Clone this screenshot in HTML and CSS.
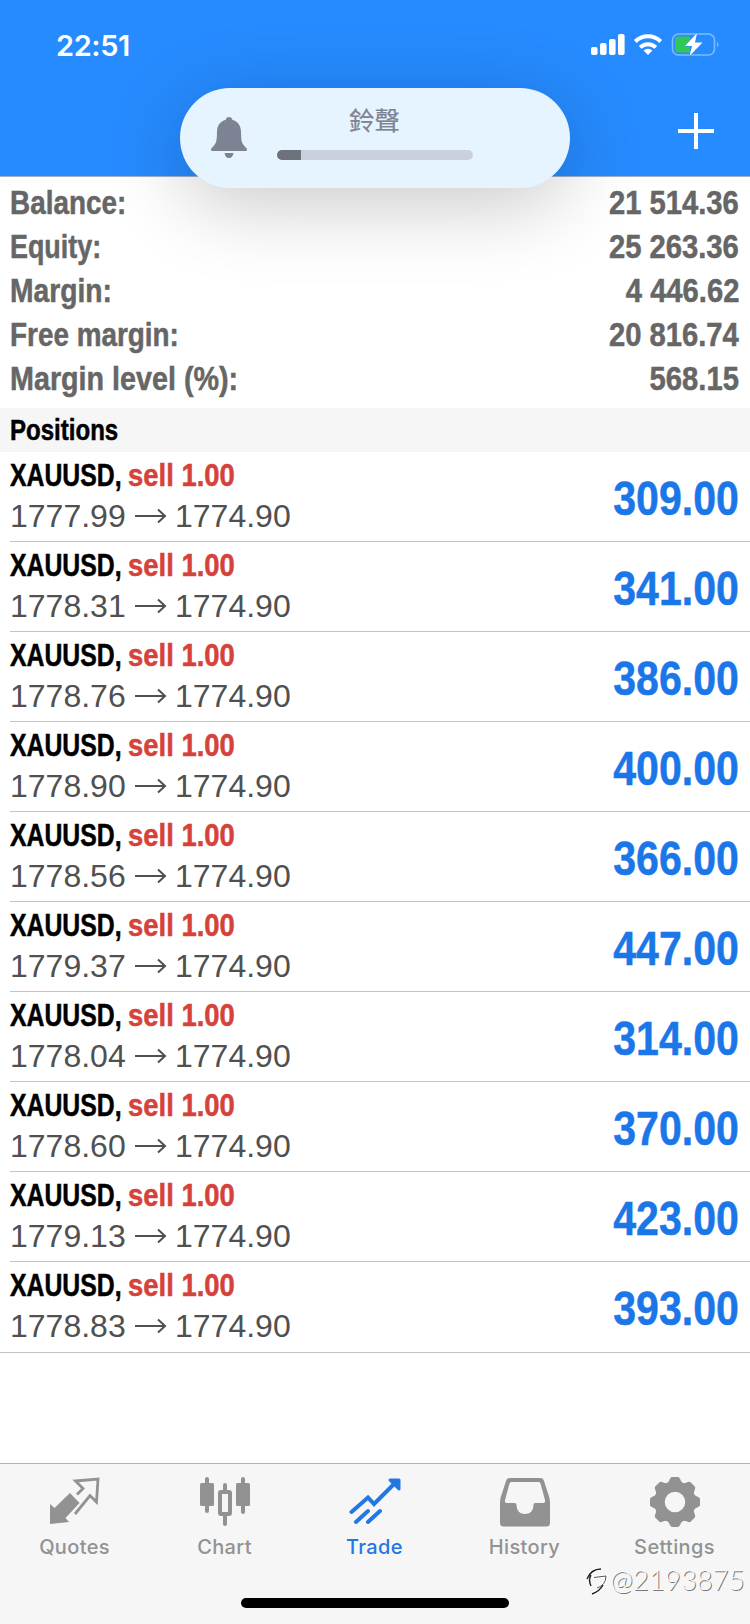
FILE: index.html
```html
<!DOCTYPE html>
<html lang="en">
<head>
  <meta charset="UTF-8">
  <meta name="viewport" content="width=device-width, initial-scale=1.0">
  <title>Trade</title>
  <link rel="stylesheet" href="styles.css">
</head>
<body>
  <header>
    <div class="status-bar">
      <span class="time">22:51</span>
      <svg class="status-icons" width="130" height="26" viewBox="0 0 130 26">
        <g fill="#fff">
          <rect x="1" y="15" width="6.6" height="8" rx="2"/>
          <rect x="10" y="11" width="6.6" height="12" rx="2"/>
          <rect x="19" y="7" width="6.6" height="16" rx="2"/>
          <rect x="28" y="2" width="6.6" height="21" rx="2"/>
          <path d="M58 23l-4.400-4.400a6.300 6.300 0 0 1 8.800 0z"/>
        </g>
        <g fill="none" stroke="#fff" stroke-width="4">
          <path d="M45.300 9.500a18 18 0 0 1 25.400 0"/>
          <path d="M50.200 15.400a11 11 0 0 1 15.600 0"/>
        </g>
        <rect x="82.500" y="2" width="42" height="21" rx="6" fill="none" stroke="#7fbcff" stroke-width="1.600"/>
        <path d="M127 9.500q3 3 0 6z" fill="#7fbcff"/>
        <path d="M88 4.500h12v16H88a3 3 0 0 1-3-3v-10a3 3 0 0 1 3-3z" fill="#32c759"/>
        <path d="M107 1L95 14h7l-2.500 10L112.500 10.500h-7.500z" fill="#fff" stroke="#268bff" stroke-width="1" paint-order="stroke"/>
      </svg>
    </div>
    <svg class="add" width="36" height="36" viewBox="0 0 36 36">
      <path d="M18 0v36M0 18h36" stroke="#fff" stroke-width="4"/>
    </svg>
  </header>

  <!-- ringer volume overlay -->
  <div class="ringer">
    <svg class="bell" width="36" height="42" viewBox="0 0 36 42">
      <path d="M18 0c2 0 3 1.200 3.300 2.700C27 4.200 29.800 8.800 30 14.500c.2 8 .2 11 3.500 14.500 1.500 1.700 2.500 2.600 2.500 3.800 0 .8-.6 1.200-1.500 1.200h-33C.6 34 0 33.600 0 32.800c0-1.200 1-2.100 2.500-3.800C5.800 25.500 5.800 22.500 6 14.500 6.200 8.800 9 4.200 14.700 2.700 15 1.200 16 0 18 0zM13.500 36h9c-.4 3-2 5-4.500 5s-4.100-2-4.500-5z" fill="#7d8392"/>
    </svg>
    <div class="ringer-body">
      <span class="ringer-title">鈴聲</span>
      <div class="volume"><div class="volume-level"></div></div>
    </div>
  </div>

  <main>
    <div class="summary">
      <div class="line"><span class="label balance">Balance:</span><span class="value">21 514.36</span></div>
      <div class="line"><span class="label equity">Equity:</span><span class="value">25 263.36</span></div>
      <div class="line"><span class="label margin">Margin:</span><span class="value">4 446.62</span></div>
      <div class="line"><span class="label free">Free margin:</span><span class="value">20 816.74</span></div>
      <div class="line"><span class="label level">Margin level (%):</span><span class="value">568.15</span></div>
    </div>

    <h2 class="section-title"><span>Positions</span></h2>

    <div id="positions"></div>
  </main>

  <nav>
    <a class="tab">
      <svg width="52" height="50" viewBox="0 0 52 50">
        <path d="M1 27l4.500 4L21 16l9.500 10L16.500 41l3.500 4L1 47z" fill="#929292"/>
        <path d="M28 17.500l6-6-7.500-7.500 22.500-2-1.500 23-6.500-6.500L26 37" fill="none" stroke="#929292" stroke-width="2.800"/>
      </svg>
      <span>Quotes</span>
    </a>
    <a class="tab">
      <svg width="52" height="50" viewBox="0 0 52 50" fill="#929292">
        <rect x="1" y="6" width="14" height="23" rx="1.500"/>
        <rect x="6" y="0" width="4" height="36" rx="2"/>
        <rect x="37" y="6" width="14" height="23" rx="1.500"/>
        <rect x="42" y="0" width="4" height="37" rx="2"/>
        <rect x="24" y="6" width="4" height="9" rx="2"/>
        <rect x="24" y="37" width="4" height="12" rx="2"/>
        <rect x="21" y="15" width="10" height="22" rx="1" fill="none" stroke="#929292" stroke-width="4"/>
      </svg>
      <span>Chart</span>
    </a>
    <a class="tab active">
      <svg width="52" height="50" viewBox="0 0 52 50" fill="none" stroke="#2377e3" stroke-width="4" stroke-linecap="round">
        <path d="M2.500 35L19 20.500l6 6.500L46 6M7 45l12-11M19 45l12-11"/>
        <path d="M41 3h9v9z" fill="#2377e3" stroke-width="3" stroke-linejoin="round"/>
      </svg>
      <span>Trade</span>
    </a>
    <a class="tab">
      <svg width="52" height="50" viewBox="0 0 52 50">
        <path fill-rule="evenodd" d="M11 1h30a4 4 0 0 1 4 3l5.500 17 .5 4v21a3.500 3.500 0 0 1-3.500 3.500h-43A3.500 3.500 0 0 1 1 46V25l.5-4L7 4a4 4 0 0 1 4-3zM12.500 5a2 2 0 0 0-2 1.500L6 23c-.4 1.800.3 3 2 3h7.500c1.500 0 2 .8 2 2 .2 6 3.500 9 8.500 9s8.300-3 8.500-9c0-1.200.5-2 2-2H44c1.700 0 2.400-1.200 2-3L41.500 6.500a2 2 0 0 0-2-1.500z" fill="#929292"/>
      </svg>
      <span>History</span>
    </a>
    <a class="tab">
      <svg width="52" height="50" viewBox="0 0 52 50">
        <g fill="#929292">
          <path id="tooth" d="M16 10l4-6Q21.500 0 23 0h6q1.500 0 3 4l4 6z"/>
          <use href="#tooth" transform="rotate(45 26 25)"/>
          <use href="#tooth" transform="rotate(90 26 25)"/>
          <use href="#tooth" transform="rotate(135 26 25)"/>
          <use href="#tooth" transform="rotate(180 26 25)"/>
          <use href="#tooth" transform="rotate(225 26 25)"/>
          <use href="#tooth" transform="rotate(270 26 25)"/>
          <use href="#tooth" transform="rotate(315 26 25)"/>
        </g>
        <circle cx="26" cy="25" r="15.500" fill="none" stroke="#929292" stroke-width="10.500"/>
      </svg>
      <span>Settings</span>
    </a>
    <div class="home-indicator"></div>
  </nav>

  <div class="user-tag">
    <svg width="24" height="30" viewBox="0 0 24 30" fill="none">
      <path d="M2 14Q6 4 16 4M6 9Q3 15 6 21M2 13l19-2q0 9-9 12M18 21q-3 6-11 8" stroke="#fff" stroke-width="3.500"/>
      <path d="M2 14Q6 4 16 4M6 10Q3 15 6 21M18 20q-3 6-11 9" stroke="#222" stroke-width="1.500"/>
      <path d="M9 12.500l12-1.500q0 9-9 12" stroke="#555" stroke-width="1"/>
    </svg>
    <span>@2193875</span>
  </div>

  <script src="script.js"></script>
</body>
</html>
```
FILE: script.js
```js
const positions = [
  { open: '1777.99', profit: '309.00' },
  { open: '1778.31', profit: '341.00' },
  { open: '1778.76', profit: '386.00' },
  { open: '1778.90', profit: '400.00' },
  { open: '1778.56', profit: '366.00' },
  { open: '1779.37', profit: '447.00' },
  { open: '1778.04', profit: '314.00' },
  { open: '1778.60', profit: '370.00' },
  { open: '1779.13', profit: '423.00' },
  { open: '1778.83', profit: '393.00' }
];

document.getElementById('positions').innerHTML = positions.map(p => `
  <div class="position">
    <div class="info">
      <div class="title"><span class="symbol">XAUUSD,</span><span class="side">sell 1.00</span></div>
      <div class="prices">
        <span class="price">${p.open}</span>
        <svg class="arrow" width="32" height="16" viewBox="0 0 32 16"><path d="M0 8h29.500M23 1.500l7 6.500-7 6.500" fill="none" stroke="#505050" stroke-width="2"/></svg>
        <span class="price">1774.90</span>
      </div>
    </div>
    <span class="profit">${p.profit}</span>
  </div>`).join('');
```
FILE: styles.css
```css
:root {
  --blue: #268bff;
  --profit: #1b76e8;
  --sell: #d5423a;
  --gray: #666;
  --tab-gray: #929292;
}

* {
  box-sizing: border-box;
}

body {
  margin: 0;
  width: 750px;
  height: 1624px;
  background: #fff;
  font-family: "Liberation Sans", Arial, sans-serif;
  display: flex;
  flex-direction: column;
  position: relative;
  overflow: hidden;
}

header {
  height: 177px;
  background: var(--blue);
  border-bottom: 1px solid #9fb0c4;
  display: flex;
  flex-direction: column;
  flex-shrink: 0;
}

.status-bar {
  height: 112px;
  padding: 32px 30px 0 56px;
  display: flex;
  justify-content: space-between;
  align-items: flex-start;
}

.time {
  font-family: Inter, sans-serif;
  font-size: 29px;
  line-height: 27px;
  font-weight: 600;
  letter-spacing: -0.4px;
  color: #fff;
}

.add {
  margin: 1px 36px 0 auto;
}

.ringer {
  position: absolute;
  left: 180px;
  top: 88px;
  width: 390px;
  height: 100px;
  border-radius: 50px;
  background: #e6f4ff;
  box-shadow: 0 16px 80px rgba(0, 0, 0, 0.22);
  display: flex;
  align-items: flex-start;
  padding: 17px 0 0 31px;
}

.bell {
  margin-top: 12px;
}

.ringer-body {
  margin-left: 30px;
  width: 196px;
  display: flex;
  flex-direction: column;
  align-items: center;
}

.ringer-title {
  font-family: "Liberation Sans", "Noto Sans CJK TC", sans-serif;
  font-size: 25.5px;
  line-height: 32px;
  margin-left: -1px;
  color: #7d8392;
  -webkit-text-stroke: 0.2px;
}

.volume {
  margin-top: 13px;
  width: 196px;
  height: 10px;
  border-radius: 5px;
  background: #c9d1e0;
  overflow: hidden;
}

.volume-level {
  width: 24px;
  height: 10px;
  background: #6d727d;
}

main {
  flex: 1;
}

.summary {
  height: 231px;
  padding: 4px 11px 0 10px;
}

.line {
  display: flex;
  justify-content: space-between;
  height: 44px;
  line-height: 44px;
  font-size: 33px;
  font-weight: bold;
  color: var(--gray);
}

/* condensed bold */
.label,
.section-title span,
.symbol,
.side {
  display: inline-block;
  transform-origin: left center;
  white-space: nowrap;
}

.label,
.value,
.section-title span,
.symbol,
.side,
.profit {
  -webkit-text-stroke: 0.5px;
}

.label {
  transform: scaleX(0.845);
}

.equity {
  transform: scaleX(0.815);
}

.margin {
  transform: scaleX(0.855);
}

.level {
  transform: scaleX(0.87);
}

.value {
  transform: scaleX(0.885);
  transform-origin: right center;
}

.section-title {
  margin: 0;
  height: 44px;
  line-height: 44px;
  padding-left: 10px;
  background: #f6f6f6;
  font-size: 29.5px;
  font-weight: bold;
}

.section-title span {
  transform: scaleX(0.815);
}

.position {
  height: 90px;
  margin-left: 10px;
  padding-right: 11px;
  border-bottom: 1px solid #c4c4c6;
  display: flex;
  justify-content: space-between;
}

.position:last-child {
  height: 91px;
  margin-left: 0;
  padding-left: 10px;
}

.title {
  height: 44px;
  line-height: 45px;
  padding-top: 1px;
  font-size: 31px;
  font-weight: bold;
  display: flex;
}

.symbol {
  width: 118px;
  transform: scaleX(0.8);
}

.side {
  color: var(--sell);
  transform: scaleX(0.885);
}

.prices {
  display: flex;
  align-items: center;
  height: 40px;
  font-size: 32px;
  line-height: 40px;
  color: #505050;
}

.price {
  width: 116px;
}

.arrow {
  margin: 0 8px 0 9px;
}

.profit {
  font-size: 48px;
  line-height: 93px;
  font-weight: bold;
  color: var(--profit);
  transform: scaleX(0.855);
  transform-origin: right center;
}

nav {
  height: 161px;
  flex-shrink: 0;
  border-top: 1px solid #b2b2b2;
  background: #f6f6f6;
  display: flex;
  flex-wrap: wrap;
  justify-content: center;
  align-content: flex-start;
}

.tab {
  width: 150px;
  height: 134px;
  padding: 13px 1px 0 0;
  display: flex;
  flex-direction: column;
  align-items: center;
  color: var(--tab-gray);
  font-family: Inter, sans-serif;
  font-size: 20px;
  font-weight: 500;
  letter-spacing: 0.35px;
}

.tab span {
  margin-top: 8px;
  line-height: 24px;
}

.active {
  color: #2377e3;
}

.home-indicator {
  width: 268px;
  height: 10px;
  border-radius: 5px;
  background: #000;
}

.user-tag {
  position: absolute;
  left: 585px;
  top: 1565px;
  display: flex;
  align-items: center;
  gap: 1px;
  font-family: Lato, sans-serif;
  font-weight: 300;
  font-size: 27.5px;
  line-height: 30px;
  color: #fafafa;
  text-shadow: 1px 1px 0 #777;
}
```
